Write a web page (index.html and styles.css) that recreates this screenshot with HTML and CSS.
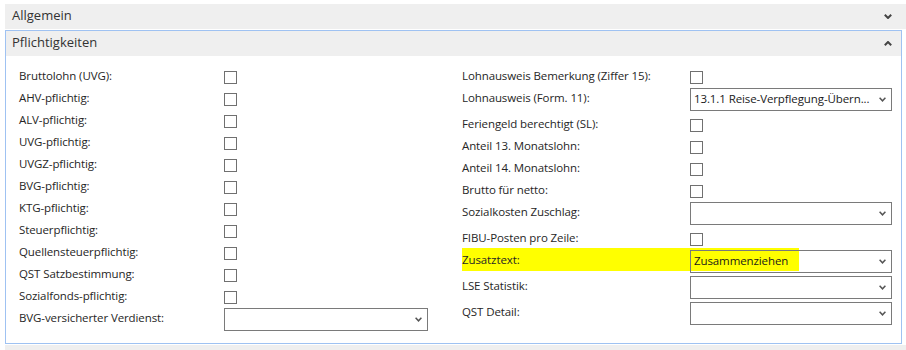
FILE: index.html
```html
<!DOCTYPE html>
<html lang="de">

<head>
  <meta charset="UTF-8" />
  <title>Lohnart – Pflichtigkeiten</title>
  <link rel="stylesheet" href="styles.css">
</head>

<body>

  <!-- Zugeklapptes Inforegister -->
  <div class="fasttab fasttab-closed">
    <span class="fasttab-title">Allgemein</span>
    <svg class="fasttab-chevron" width="8" height="5" viewBox="0 0 8 5">
      <polyline points="0.8,0.8 4,4 7.2,0.8" />
    </svg>
  </div>

  <!-- Aufgeklapptes Inforegister -->
  <div class="fasttab-panel">
    <div class="fasttab fasttab-open">
      <span class="fasttab-title">Pflichtigkeiten</span>
      <svg class="fasttab-chevron" width="8" height="5" viewBox="0 0 8 5">
        <polyline points="0.8,4.2 4,1 7.2,4.2" />
      </svg>
    </div>

    <div class="fields">
      <div class="column column-left">
        <div class="field"><span class="label">Bruttolohn (UVG):</span><span class="check"></span></div>
        <div class="field"><span class="label">AHV-pflichtig:</span><span class="check"></span></div>
        <div class="field"><span class="label">ALV-pflichtig:</span><span class="check"></span></div>
        <div class="field"><span class="label">UVG-pflichtig:</span><span class="check"></span></div>
        <div class="field"><span class="label">UVGZ-pflichtig:</span><span class="check"></span></div>
        <div class="field"><span class="label">BVG-pflichtig:</span><span class="check"></span></div>
        <div class="field"><span class="label">KTG-pflichtig:</span><span class="check"></span></div>
        <div class="field"><span class="label">Steuerpflichtig:</span><span class="check"></span></div>
        <div class="field"><span class="label">Quellensteuerpflichtig:</span><span class="check"></span></div>
        <div class="field"><span class="label">QST Satzbestimmung:</span><span class="check"></span></div>
        <div class="field"><span class="label">Sozialfonds-pflichtig:</span><span class="check"></span></div>
        <div class="field field-select">
          <span class="label">BVG-versicherter Verdienst:</span>
          <div class="select"><span class="select-value"></span>
            <svg class="select-chevron" width="7" height="5" viewBox="0 0 7 5"><polyline points="0.6,0.8 3.5,3.8 6.4,0.8" /></svg>
          </div>
        </div>
      </div>

      <div class="column column-right">
        <div class="field"><span class="label">Lohnausweis Bemerkung (Ziffer 15):</span><span class="check"></span></div>
        <div class="field field-select">
          <span class="label">Lohnausweis (Form. 11):</span>
          <div class="select"><span class="select-value">13.1.1 Reise-Verpflegung-Übern...</span>
            <svg class="select-chevron" width="7" height="5" viewBox="0 0 7 5"><polyline points="0.6,0.8 3.5,3.8 6.4,0.8" /></svg>
          </div>
        </div>
        <div class="field"><span class="label">Feriengeld berechtigt (SL):</span><span class="check"></span></div>
        <div class="field"><span class="label">Anteil 13. Monatslohn:</span><span class="check"></span></div>
        <div class="field"><span class="label">Anteil 14. Monatslohn:</span><span class="check"></span></div>
        <div class="field"><span class="label">Brutto für netto:</span><span class="check"></span></div>
        <div class="field field-select">
          <span class="label">Sozialkosten Zuschlag:</span>
          <div class="select"><span class="select-value"></span>
            <svg class="select-chevron" width="7" height="5" viewBox="0 0 7 5"><polyline points="0.6,0.8 3.5,3.8 6.4,0.8" /></svg>
          </div>
        </div>
        <div class="field"><span class="label">FIBU-Posten pro Zeile:</span><span class="check"></span></div>
        <div class="field field-select marked">
          <span class="label">Zusatztext:</span>
          <div class="select"><span class="select-value">Zusammenziehen</span>
            <svg class="select-chevron" width="7" height="5" viewBox="0 0 7 5"><polyline points="0.6,0.8 3.5,3.8 6.4,0.8" /></svg>
          </div>
        </div>
        <div class="field field-select">
          <span class="label">LSE Statistik:</span>
          <div class="select"><span class="select-value"></span>
            <svg class="select-chevron" width="7" height="5" viewBox="0 0 7 5"><polyline points="0.6,0.8 3.5,3.8 6.4,0.8" /></svg>
          </div>
        </div>
        <div class="field field-select">
          <span class="label">QST Detail:</span>
          <div class="select"><span class="select-value"></span>
            <svg class="select-chevron" width="7" height="5" viewBox="0 0 7 5"><polyline points="0.6,0.8 3.5,3.8 6.4,0.8" /></svg>
          </div>
        </div>
      </div>
    </div>
  </div>

  <!-- Naechstes Inforegister (abgeschnitten) -->
  <div class="fasttab fasttab-closed fasttab-next"></div>

</body>

</html>
```

FILE: styles.css
```css
body {
  margin: 0;
  padding-top: 4px;
  height: 350px;
  box-sizing: border-box;
  background: white;
  font-family: 'Open Sans', 'Noto Sans', sans-serif;
  color: #262626;
  overflow: hidden;
}

.fasttab {
  height: 25px;
  display: flex;
  align-items: center;
  justify-content: space-between;
  background: #efefef;
  box-sizing: border-box;
}

.fasttab-closed {
  margin-left: 5px;
  padding: 0 14px 0 7px;
}

.fasttab-open {
  padding: 0 9px 0 6px;
}

.fasttab-title {
  font-size: 13px;
  color: #333;
  padding-bottom: 3px;
}

.fasttab-open .fasttab-title {
  padding-bottom: 4px;
}

.fasttab-chevron polyline {
  fill: none;
  stroke: #444;
  stroke-width: 2;
}

.fasttab-next {
  margin-top: 1px;
}

.fasttab-panel {
  margin: 1px 4px 0 5px;
  border: 1px solid #9fc2f2;
}

.fields {
  display: flex;
  align-items: flex-start;
  gap: 34px;
  padding: 10px 0 9px 13px;
}

.column-left .field {
  grid-template-columns: 205px 204px;
}

.column-right .field {
  grid-template-columns: 228px 202px;
}

.field {
  display: grid;
  align-items: center;
  height: 22px;
  font-size: 11.5px;
  letter-spacing: -0.1px;
  white-space: nowrap;
}

.field .label {
  padding-bottom: 3px;
}

.field-select {
  height: 26px;
  align-items: start;
}

.field-select .label {
  line-height: 20px;
  padding-bottom: 0;
}

.check {
  width: 13px;
  height: 13px;
  box-sizing: border-box;
  border: 1px solid #707070;
  background: white;
}

.select {
  height: 23px;
  box-sizing: border-box;
  border: 1px solid #7a7a7a;
  display: flex;
  align-items: center;
  justify-content: space-between;
  padding: 0 5px 0 3px;
  color: #1a1a1a;
  overflow: hidden;
}

.select-value {
  padding-bottom: 3px;
}

.select-chevron {
  flex-shrink: 0;
}

.select-chevron polyline {
  fill: none;
  stroke: #555;
  stroke-width: 1.5;
}

/* Gelb markierte Zeile */
.marked {
  position: relative;
}

.marked::before {
  content: "";
  position: absolute;
  left: 0;
  top: -2px;
  width: 337px;
  height: 23px;
  background: #ffff00;
}

.marked .label,
.marked .select {
  position: relative;
}
```
